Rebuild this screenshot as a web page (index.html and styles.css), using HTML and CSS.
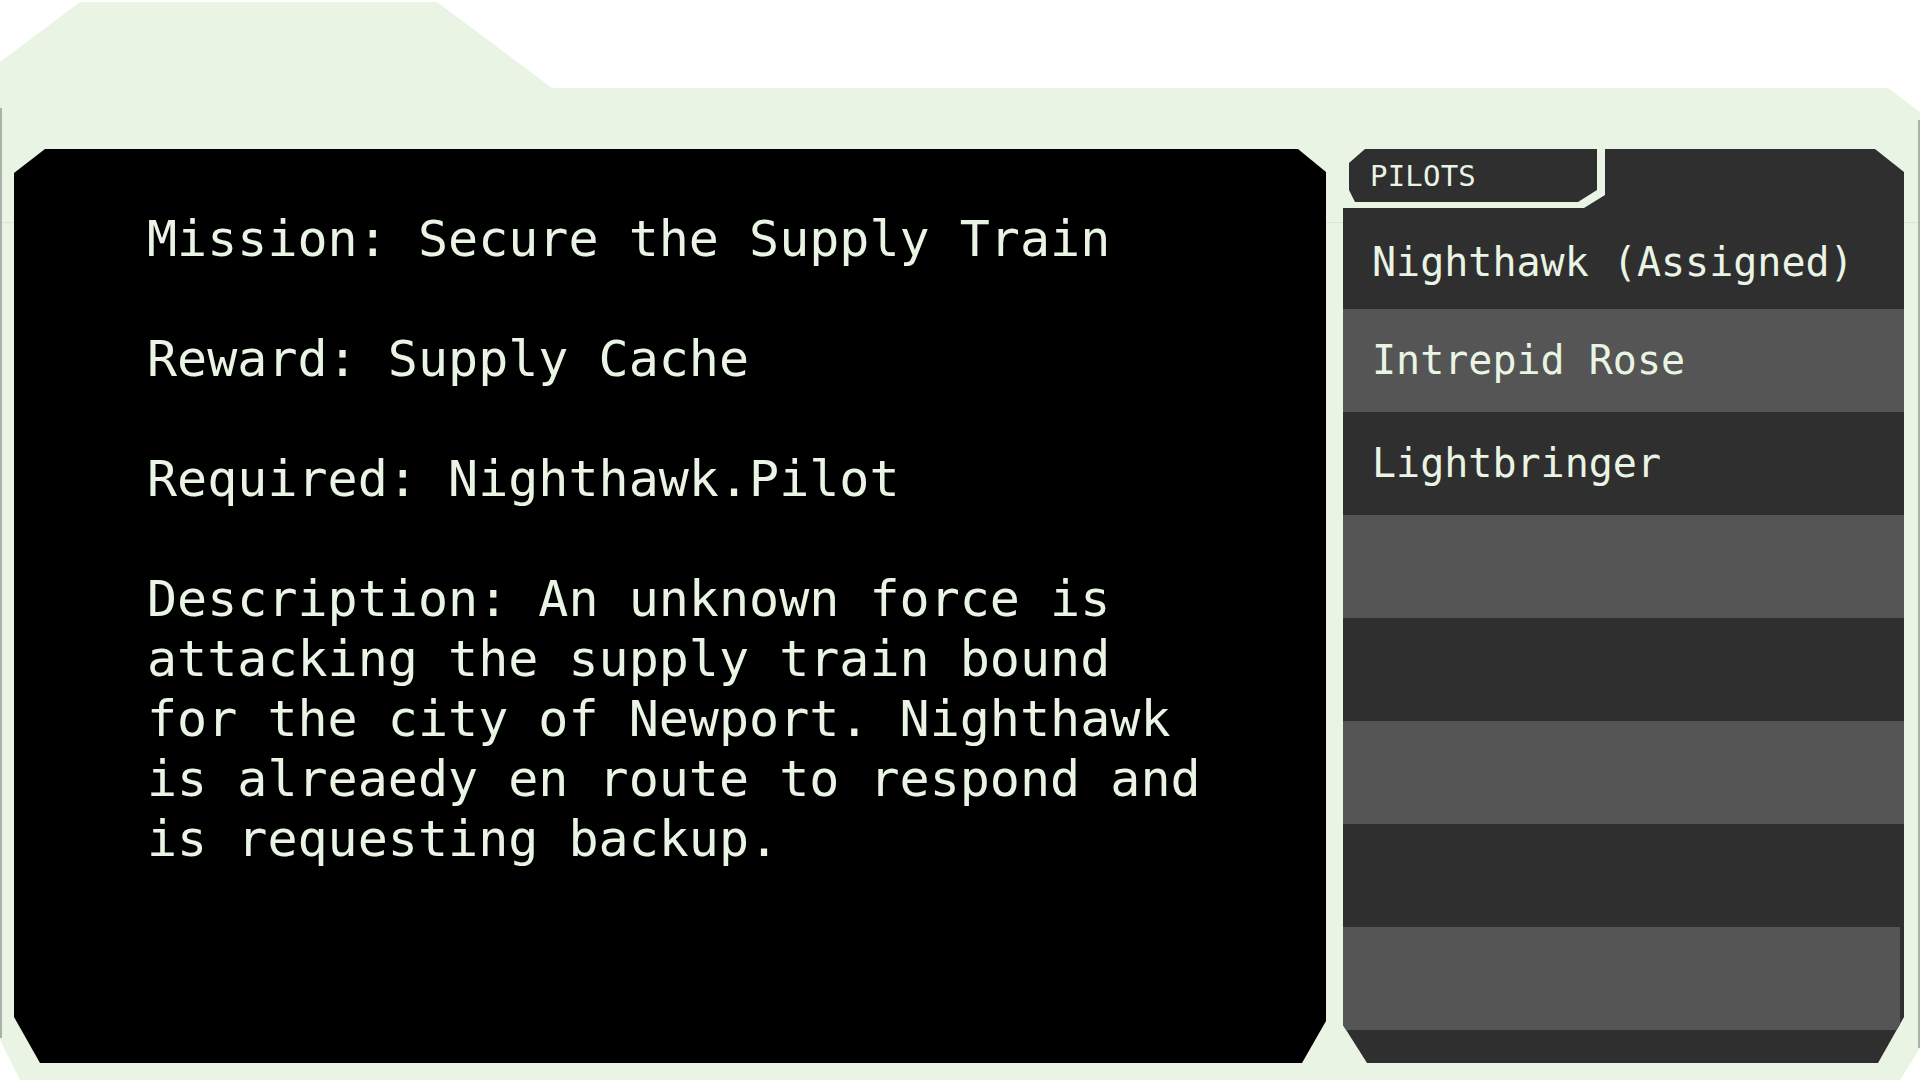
FILE: index.html
```html
<!DOCTYPE html>
<html lang="en">
<head>
<meta charset="utf-8">
<title>Mission Briefing</title>
<link rel="stylesheet" href="styles.css">
</head>
<body>
<div class="folder">
  <section class="briefing">
    <p class="line">Mission: Secure the Supply Train</p>
    <p class="line">Reward: Supply Cache</p>
    <p class="line">Required: Nighthawk.Pilot</p>
    <p class="line desc">Description: An unknown force is attacking the supply train bound for the city of Newport. Nighthawk is alreaedy en route to respond and is requesting backup.</p>
  </section>
  <aside class="pilots">
    <div class="pilots-head">
      <div class="notch">
        <div class="tab">PILOTS</div>
      </div>
    </div>
    <ul class="pilot-list">
      <li class="pilot first">Nighthawk (Assigned)</li>
      <li class="pilot">Intrepid Rose</li>
      <li class="pilot">Lightbringer</li>
      <li class="pilot"></li>
      <li class="pilot"></li>
      <li class="pilot"></li>
      <li class="pilot"></li>
      <li class="pilot last"></li>
    </ul>
  </aside>
</div>
</body>
</html>
```

FILE: styles.css
```css
html, body {
  margin: 0;
  padding: 0;
  background: #ffffff;
}

body {
  width: 1920px;
  height: 1080px;
  overflow: hidden;
  font-family: "DejaVu Sans Mono", "Liberation Mono", monospace;
  color: #e9f4e4;
}

.folder {
  box-sizing: border-box;
  width: 1920px;
  height: 1080px;
  padding: 149px 16px 17px 14px;
  display: flex;
  gap: 17px;
  background:
    linear-gradient(#a9b2a8, #a9b2a8) 0 108px / 2px 930px no-repeat,
    linear-gradient(#a9b2a8, #a9b2a8) right 0 top 120px / 2px 928px no-repeat,
    linear-gradient(#dbe5d7, #dbe5d7) 0 222px / 100% 1px no-repeat,
    #e9f4e4;
  clip-path: polygon(0 62px, 80px 2px, 437px 2px, 552px 88px, 1888px 88px, 1920px 112px, 1920px 1048px, 1900px 1080px, 20px 1080px, 0 1040px);
}

/* ---------- left briefing panel ---------- */
.briefing {
  flex: 0 0 1312px;
  box-sizing: border-box;
  height: 914px;
  padding: 60px 0 0 133px;
  background: #000000;
  clip-path: polygon(0 24px, 31px 0, 1284px 0, 1312px 23px, 1312px 872px, 1288px 100%, 26px 100%, 0 868px);
}

.line {
  margin: 0 0 60px;
  font-size: 50px;
  line-height: 60px;
  white-space: pre-wrap;
}

.desc {
  max-width: 1070px;
}

/* ---------- right pilots panel ---------- */
.pilots {
  flex: 1 1 auto;
  height: 914px;
  display: flex;
  flex-direction: column;
  background: #2f2f2f;
  clip-path: polygon(0 0, 532px 0, 100% 23px, 100% 868px, 535px 100%, 24px 100%, 0 876px);
}

.pilots-head {
  flex: 0 0 59px;
  display: flex;
}

.notch {
  box-sizing: border-box;
  width: 262px;
  height: 59px;
  padding: 0 8px 6px 6px;
  background: #e9f4e4;
  clip-path: polygon(0 0, 100% 0, 100% 46px, 241px 100%, 0 100%);
}

.tab {
  box-sizing: border-box;
  height: 53px;
  padding-left: 21px;
  display: flex;
  align-items: center;
  background: #2f2f2f;
  font-size: 29px;
  letter-spacing: 0.2px;
  clip-path: polygon(16px 0, 100% 0, 100% 41px, 229px 100%, 6px 100%, 0 41px, 0 14px);
}

.pilot-list {
  list-style: none;
  margin: 0;
  padding: 0;
  display: flex;
  flex-direction: column;
}

.pilot {
  box-sizing: border-box;
  height: 103px;
  padding: 0 0 2px 29px;
  display: flex;
  align-items: center;
  font-size: 40px;
  line-height: 46px;
  white-space: pre;
}

.pilot.first {
  height: 101px;
  padding: 6px 0 0 29px;
}

.pilot:nth-child(even) {
  background: #555555;
}

.pilot.last {
  margin-right: 4px;
}
```
